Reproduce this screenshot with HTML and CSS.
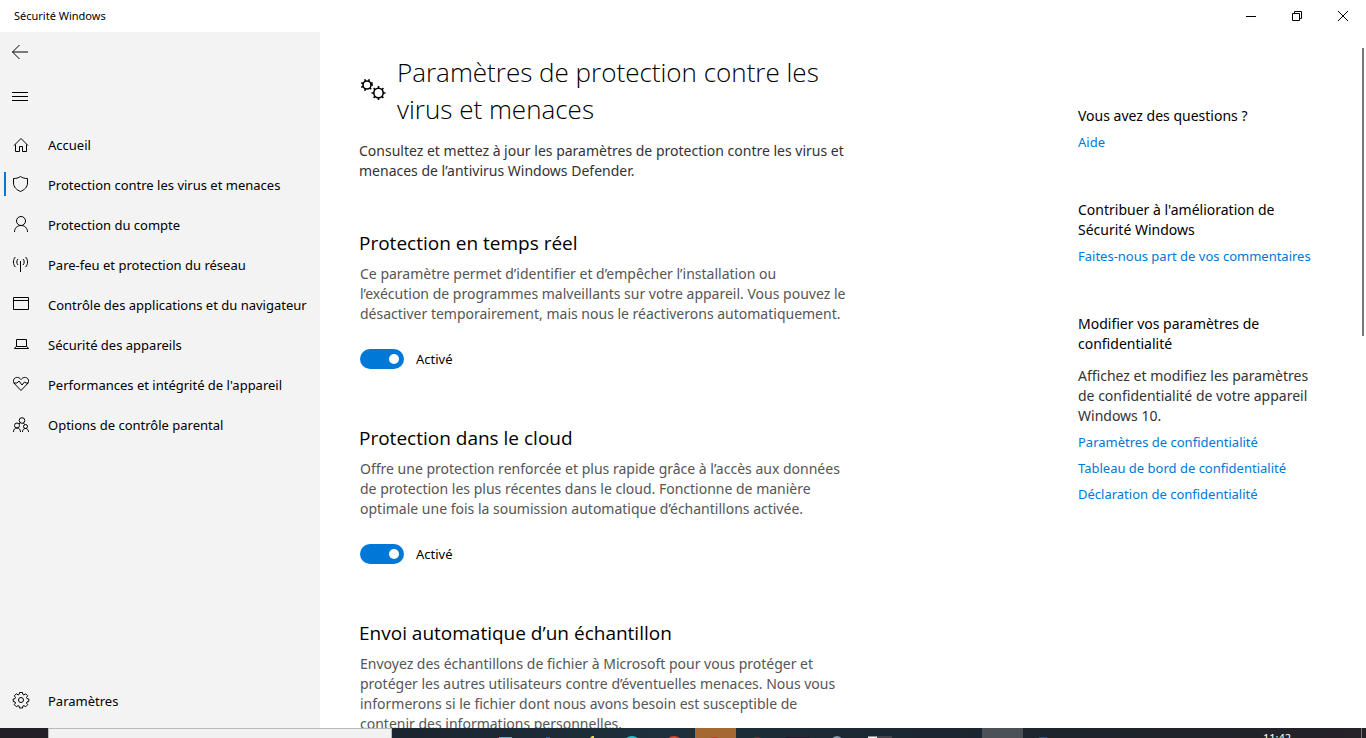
FILE: index.html
```html
<!DOCTYPE html>
<html lang="fr">
<head>
<meta charset="utf-8">
<title>Sécurité Windows</title>
<link rel="stylesheet" href="styles.css">
</head>
<body>
<div class="desktop">
  <header class="titlebar">
    <span class="titlebar-name">Sécurité Windows</span>
    <div class="window-controls">
      <button class="window-button" aria-label="Réduire"><svg width="12" height="12" viewBox="0 0 12 12"><path d="M1 6.5h10"/></svg></button>
      <button class="window-button" aria-label="Restaurer"><svg width="12" height="12" viewBox="0 0 12 12"><path d="M1.5 3.500h7v7h-7zM3.500 3.500v-2h7v7h-2"/></svg></button>
      <button class="window-button" aria-label="Fermer"><svg width="12" height="12" viewBox="0 0 12 12"><path d="M1 1l10 10M11 1L1 11"/></svg></button>
    </div>
  </header>

  <div class="app">
    <nav class="sidebar">
      <button class="icon-button" aria-label="Retour"><svg width="18" height="18" viewBox="0 0 18 18"><path d="M1.500 9H17M8.500 2l-7 7 7 7"/></svg></button>
      <button class="icon-button menu-button" aria-label="Menu"><svg width="18" height="18" viewBox="0 0 18 18"><path d="M1 5.500h16M1 9.500h16M1 13.500h16"/></svg></button>
      <ul class="nav-list">
        <li><a class="nav-item" href="#"><svg width="18" height="18" viewBox="0 0 18 18"><path d="M2 9.500L9 2.500l7 7M3.500 8.500v7h4v-5h3v5h4v-7"/></svg>Accueil</a></li>
        <li><a class="nav-item current" href="#"><svg width="18" height="18" viewBox="0 0 18 18"><path d="M8.500.5C6.500 2 4 2.500 1.500 2.500V7c0 4.200 3 6.700 7 8.500 4-1.800 7-4.300 7-8.500V2.500C13 2.500 10.500 2 8.500.5z"/></svg>Protection contre les virus et menaces</a></li>
        <li><a class="nav-item" href="#"><svg width="18" height="18" viewBox="0 0 18 18"><circle cx="9" cy="5" r="4.500"/><path d="M2.500 16c0-3.800 2.700-6.500 6.500-6.500s6.500 2.700 6.500 6.500"/></svg>Protection du compte</a></li>
        <li><a class="nav-item" href="#"><svg width="18" height="18" viewBox="0 0 18 18"><path d="M8.500 5v11M6 3c-1.600 1.700-1.600 4.300 0 6M11 3c1.600 1.700 1.600 4.300 0 6M3.300 1C.8 3.900.8 8.100 3.300 11M13.700 1c2.500 2.900 2.500 7.100 0 10"/></svg>Pare-feu et protection du réseau</a></li>
        <li><a class="nav-item" href="#"><svg width="18" height="18" viewBox="0 0 18 18"><path d="M1.500 1.500h15v12h-15zM1.500 4.500h15"/></svg>Contrôle des applications et du navigateur</a></li>
        <li><a class="nav-item" href="#"><svg width="18" height="18" viewBox="0 0 18 18"><path d="M4.500 3.500h10v7h-10zM4.500 10.500l-2 1.500v.5h14V12l-2-1.500"/></svg>Sécurité des appareils</a></li>
        <li><a class="nav-item" href="#"><svg width="18" height="18" viewBox="0 0 18 18"><path d="M9 3.500C7 .8 3.500.8 2 3 1 4.500 1.400 6.500 2.800 8L9 14.500 15.200 8C16.600 6.500 17 4.500 16 3 14.500.8 11 .8 9 3.500zM1.500 7H5l2-2 3 4 2.500-3L14 7h2.500"/></svg>Performances et intégrité de l'appareil</a></li>
        <li><a class="nav-item" href="#"><svg width="18" height="18" viewBox="0 0 18 18"><circle cx="10" cy="4.500" r="2.800"/><circle cx="5" cy="9.500" r="2.500"/><circle cx="13.500" cy="10.500" r="2"/><path d="M1.500 16c0-2.500 1.300-4 3.500-4s3.500 1.500 3.500 4M10.500 16c0-2.200 1.200-3.500 3-3.500s3 1.300 3 3.500M7 8l1.500-1.500M11.500 7l1 1.500"/></svg>Options de contrôle parental</a></li>
      </ul>
      <a class="nav-item" href="#"><svg width="18" height="18" viewBox="0 0 18 18"><circle cx="9" cy="8" r="2.500"/><path d="M7.500.5h3l.4 2 1 .4 1.800-1.100 2 2-1.200 1.700.5 1.100 1.800.4v2.500l-1.800.4-.5 1.100 1.200 1.700-2 2-1.800-1.100-1 .4-.4 2h-3l-.4-2-1-.4-1.800 1.100-2-2L3.500 11 3 9.900l-1.800-.4V7L3 6.600l.5-1.100-1.200-1.700 2-2 1.800 1.100 1-.4z"/></svg>Paramètres</a>
    </nav>

    <main class="content">
      <article class="settings">
        <div class="page-heading">
          <svg class="gears" width="28" height="28" viewBox="0 0 28 28">
            <circle cx="8" cy="9" r="4"/>
            <path d="M12 9h2M10.800 11.800l1.400 1.400M6.500 12.700l-.8 2M4.200 10.500l-2 .8M4.200 7.500l-2-.8M6.500 5.300l-.8-2M9.500 5.300l.8-2M11.700 7.500l2-.8"/>
            <circle cx="19.500" cy="17" r="4.700"/>
            <path d="M24.200 17h2.300M22.800 20.300l1.600 1.600M19.500 21.700V24M16.200 20.300l-1.600 1.600M14.800 17h-2.300M16.200 13.700l-1.600-1.600M19.500 12.300V10M22.800 13.700l1.600-1.600"/>
          </svg>
          <h1>Paramètres de protection contre les<br>virus et menaces</h1>
        </div>
        <p class="intro">Consultez et mettez à jour les paramètres de protection contre les virus et<br>menaces de l’antivirus Windows Defender.</p>

        <section class="setting">
          <h2>Protection en temps réel</h2>
          <p>Ce paramètre permet d’identifier et d’empêcher l’installation ou<br>l’exécution de programmes malveillants sur votre appareil. Vous pouvez le<br>désactiver temporairement, mais nous le réactiverons automatiquement.</p>
          <label class="switch"><input type="checkbox" role="switch" checked>Activé</label>
        </section>
        <section class="setting">
          <h2>Protection dans le cloud</h2>
          <p>Offre une protection renforcée et plus rapide grâce à l’accès aux données<br>de protection les plus récentes dans le cloud. Fonctionne de manière<br>optimale une fois la soumission automatique d’échantillons activée.</p>
          <label class="switch"><input type="checkbox" role="switch" checked>Activé</label>
        </section>
        <section class="setting">
          <h2>Envoi automatique d’un échantillon</h2>
          <p>Envoyez des échantillons de fichier à Microsoft pour vous protéger et<br>protéger les autres utilisateurs contre d’éventuelles menaces. Nous vous<br>informerons si le fichier dont nous avons besoin est susceptible de<br>contenir des informations personnelles.</p>
        </section>
      </article>

      <aside class="help">
        <section class="help-group">
          <h3>Vous avez des questions ?</h3>
          <a href="#">Aide</a>
        </section>
        <section class="help-group">
          <h3>Contribuer à l'amélioration de<br>Sécurité Windows</h3>
          <a href="#">Faites-nous part de vos commentaires</a>
        </section>
        <section class="help-group">
          <h3>Modifier vos paramètres de<br>confidentialité</h3>
          <p>Affichez et modifiez les paramètres<br>de confidentialité de votre appareil<br>Windows 10.</p>
          <a href="#">Paramètres de confidentialité</a>
          <a href="#">Tableau de bord de confidentialité</a>
          <a href="#">Déclaration de confidentialité</a>
        </section>
      </aside>
      <div class="scroll-thumb"></div>
    </main>
  </div>

  <footer class="taskbar">
    <input class="task-search" type="text" aria-label="Rechercher">
    <div class="task-apps">
      <button class="task-app wide" aria-label="Vue des tâches"><svg width="42" height="10"><path fill="#42b4e8" d="M14 9h13v1H14z"/></svg></button>
      <button class="task-app wide" aria-label="Navigateur"><svg width="42" height="10"><path fill="#2060a8" d="M19 9h4v1h-4z"/></svg></button>
      <button class="task-app wide" aria-label="Notes"><svg width="42" height="10"><path fill="#e8d840" d="M23 8h2v2h-4z"/></svg></button>
      <button class="task-app wide" aria-label="Musique"><svg width="42" height="10"><circle cx="21" cy="17" r="9" fill="#28bdc8"/></svg></button>
      <button class="task-app wide" aria-label="Web"><svg width="42" height="10"><circle cx="21" cy="17" r="9" fill="#df4031"/></svg></button>
      <button class="task-app alert" aria-label="Messages"><svg width="41" height="10"><circle cx="20" cy="18" r="9" fill="#d8291f"/></svg></button>
      <button class="task-app" aria-label="Vidéo"><svg width="41" height="10"><circle cx="21" cy="17" r="8" fill="#a32632"/></svg></button>
      <button class="task-app" aria-label="Studio"><svg width="41" height="10"><path fill="#29152e" d="M9 9h23v1H9z"/></svg></button>
      <button class="task-app" aria-label="Compte"><svg width="41" height="10"><circle cx="19" cy="14" r="5" fill="none" stroke="#8798aa" stroke-width="2"/></svg></button>
      <button class="task-app" aria-label="Documents"><svg width="41" height="10"><path fill="#43434c" d="M18 8h15v2H18z"/><path fill="#f4f4f4" d="M9 9h9v1H9z"/><path fill="#8a9298" d="M9 8h9v1H9z"/></svg></button>
      <button class="task-app" aria-label="Dossier"></button>
      <button class="task-app" aria-label="Outils"></button>
      <button class="task-app active" aria-label="Sécurité Windows"></button>
      <button class="task-app" aria-label="Paramètres"><svg width="41" height="10"><path fill="#2c4f91" d="M17 9h7v1h-9z"/></svg></button>
    </div>
    <time class="clock">11:42</time>
    <button class="show-desktop" aria-label="Bureau"></button>
  </footer>
</div>
</body>
</html>
```
FILE: styles.css
```css
* { box-sizing: border-box; }
body {
  margin: 0;
  color: #000;
  background: #fff;
  font: 14px/20px "Noto Sans", "Open Sans", sans-serif;
  overflow: hidden;
}
h1, h2, h3, p, ul { margin: 0; padding: 0; }
ul { list-style: none; }
button { padding: 0; border: 0; background: none; }
a { text-decoration: none; }
svg { display: block; flex: none; fill: none; stroke: #000; stroke-width: 1; }

.desktop { display: flex; flex-direction: column; height: 100vh; }

.titlebar { display: flex; flex: none; justify-content: space-between; align-items: center; height: 32px; padding-left: 14px; }
.titlebar-name { font-size: 11px; }
.window-controls { display: flex; }
.window-button { display: flex; align-items: center; justify-content: center; width: 46px; height: 32px; }

.app { display: flex; flex: 1; min-height: 0; }

.sidebar { display: flex; flex: none; flex-direction: column; width: 320px; padding-bottom: 7px; background: #f3f3f3; }
.icon-button { display: flex; align-items: center; width: 48px; height: 40px; padding-left: 11px; }
.menu-button { margin-top: 4px; }
.nav-list { flex: 1; padding-top: 9px; }
.nav-item {
  position: relative;
  display: flex;
  align-items: center;
  gap: 18px;
  height: 40px;
  padding-left: 12px;
  color: #000;
  font-size: 13px;
  white-space: nowrap;
}
.nav-item.current::before { content: ""; position: absolute; left: 4px; top: 7px; width: 2px; height: 24px; background: #0078d7; }

.content { position: relative; display: flex; flex: 1; justify-content: space-between; min-width: 0; padding-left: 39px; overflow: hidden; }
.settings { padding-top: 22px; white-space: nowrap; }
.page-heading { display: flex; align-items: center; gap: 10px; }
.gears { margin-bottom: 2px; stroke-width: 1.600; }
h1 { font-family: "Open Sans", "Noto Sans", sans-serif; font-size: 26px; font-weight: 300; line-height: 37px; }
.intro { margin-top: 13px; color: #333; }
.setting { margin-top: 55px; }
.intro + .setting { margin-top: 48px; }
h2 { font-family: "Open Sans", "Noto Sans", sans-serif; font-size: 19px; font-weight: 400; line-height: 28px; }
.setting p { margin-top: 7px; padding-left: 1px; color: #555; }
.switch { display: flex; align-items: center; gap: 12px; margin-top: 25px; padding-left: 1px; font-size: 13px; }
.switch input { appearance: none; width: 44px; height: 20px; margin: 0; border-radius: 10px; background: #0078d7; }
.switch input::before { content: ""; display: block; width: 10px; height: 10px; margin: 5px 0 0 29px; border-radius: 5px; background: #fff; }
.switch input:not(:checked)::before { margin-left: 5px; }

.help { flex: none; width: 288px; padding-top: 74px; white-space: nowrap; }
.help-group { display: flex; flex-direction: column; align-items: flex-start; gap: 6px; margin-bottom: 48px; }
h3 { font-size: 14px; font-weight: 400; }
.help p { margin-top: 6px; color: #333; }
.help a { color: #0078d7; font-size: 13px; }
.scroll-thumb { position: absolute; top: 16px; right: 2px; width: 2px; height: 288px; background: #767676; }

.taskbar { display: flex; flex: none; height: 10px; padding-left: 48px; overflow: hidden; background: linear-gradient(90deg, #231f26 0, #1b252f 30%, #1d303c 48%, #1b2630 68%, #20232a 85%, #252228 100%); }
.task-search { width: 344px; height: 10px; padding: 0; border: 1px solid #b8b8b8; border-bottom: 0; background: #f1f1f1; }
.task-apps { display: flex; flex: 1; padding-left: 93px; }
.task-app { flex: none; width: 41px; height: 10px; }
.task-app svg { stroke: none; }
.wide { width: 42px; }
.alert { background: #a66833; }
.active { background: #4c5157; }
.clock { padding-top: 4px; margin-right: 70px; color: #fff; font-size: 11px; line-height: 12px; }
.show-desktop { width: 5px; height: 10px; border-left: 1px solid #777; }
```
